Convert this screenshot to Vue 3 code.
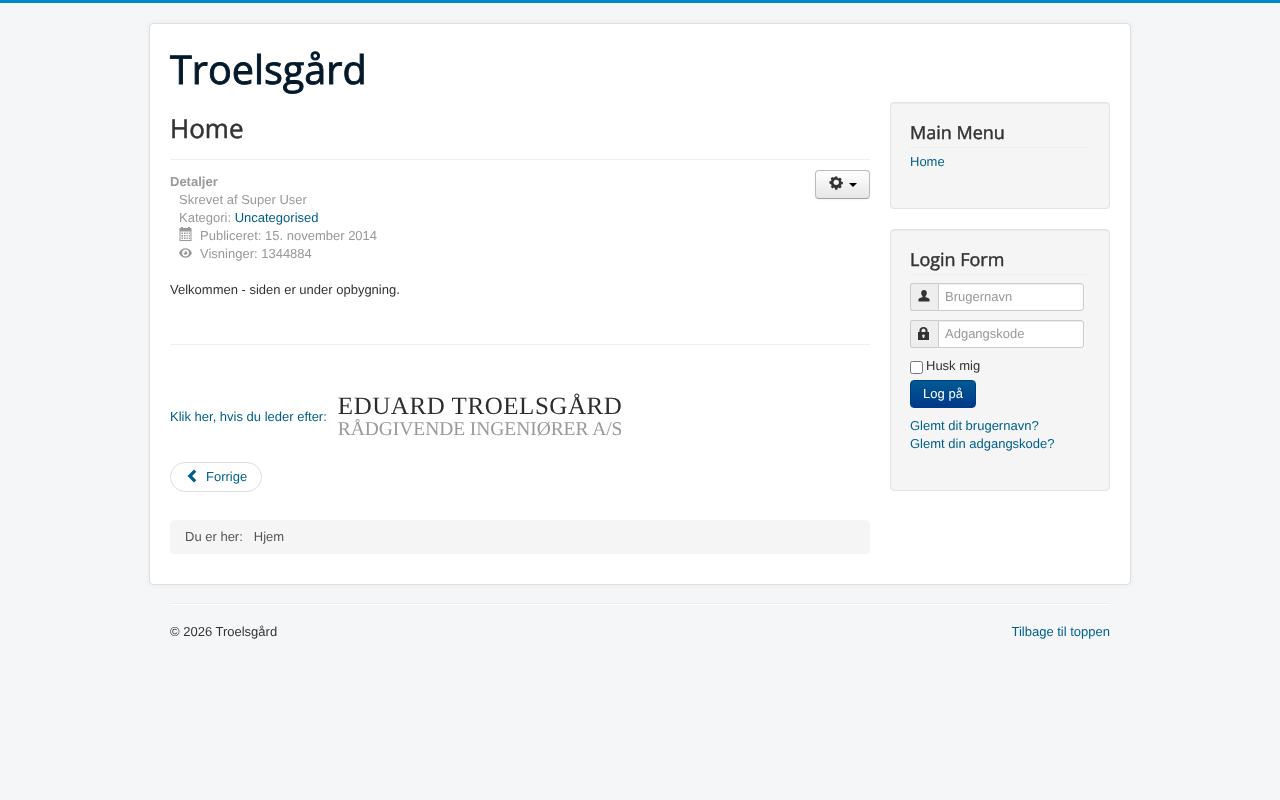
<script setup>
</script>

<template>
  <div class="page">
    <div class="card">
      <header class="brand">Troelsgård</header>
      <div class="columns">
        <main class="main">
          <h1 class="title">Home</h1>
          <div class="details-wrap">
            <button class="gear-btn" type="button" aria-label="Værktøjer">
              <svg class="gear" viewBox="0 0 16 16" width="14" height="14"><path fill="#333" fill-rule="evenodd" d="M6.700 1h2.600l.4 1.900 1.100.5 1.700-1 1.900 1.900-1 1.700.5 1.100 1.900.4v2.600l-1.900.4-.5 1.100 1 1.700-1.900 1.900-1.700-1-1.100.5-.4 1.900H6.700l-.4-1.900-1.100-.5-1.700 1-1.900-1.900 1-1.700-.5-1.100L0 9.300V6.700l1.900-.4.500-1.100-1-1.700 1.900-1.900 1.700 1 1.100-.5zM8 4.800a3.200 3.200 0 1 0 0 6.400 3.200 3.200 0 0 0 0-6.400z" transform="translate(0.500 -0.500) scale(0.97)"/></svg>
              <span class="caret"></span>
            </button>
            <dl class="details">
              <dt>Detaljer</dt>
              <dd>Skrevet af Super User</dd>
              <dd>Kategori: <a href="#">Uncategorised</a></dd>
              <dd class="with-icon">
                <svg class="ico-cal" viewBox="0 0 12 14" width="12" height="14"><path fill="#999" fill-rule="evenodd" d="M1.500 0h2v1h5V0h2v1H12v13H0V1h1.500zM1 4.500V13h10V4.500zM2 5.500h1.500V7H2zm2.500 0H6V7H4.500zm2.500 0h1.300V7H7zm2.300 0H10.500V7H9.300zM2 8h1.500v1.500H2zm2.500 0H6v1.500H4.500zM7 8h1.300v1.500H7zm2.300 0h1.200v1.500H9.300zM2 10.500h1.500V12H2zm2.500 0H6V12H4.500zm2.500 0h1.300V12H7zm2.300 0h1.200V12H9.300z"/></svg>
                <span>Publiceret: 15. november 2014</span>
              </dd>
              <dd class="with-icon">
                <svg class="ico-eye" viewBox="0 0 14 10" width="13" height="10"><path fill="#999" fill-rule="evenodd" d="M7 0c3.200 0 5.800 2 7 5-1.200 3-3.800 5-7 5S1.200 8 0 5c1.200-3 3.800-5 7-5zm0 1.300a3.700 3.700 0 1 0 0 7.400 3.700 3.700 0 0 0 0-7.400zM7 3a2 2 0 1 1-2 2c.6.400 1.600-.2 1.300-.9C6 3.500 6.400 3 7 3z"/></svg>
                <span>Visninger: 1344884</span>
              </dd>
            </dl>
          </div>
          <p class="intro">Velkommen - siden er under opbygning.</p>
          <div class="rule"></div>
          <p class="lookup">
            <a href="#">Klik her, hvis du leder efter:</a>
            <span class="wordmark">
              <span class="wm-top">EDUARD TROELSGÅRD</span>
              <span class="wm-bottom">RÅDGIVENDE INGENIØRER A/S</span>
            </span>
          </p>
          <a class="pager" href="#">
            <svg viewBox="0 0 10 14" width="11" height="14"><path fill="#005e8d" d="M7.500 0.500 9.800 2.800 5.600 7l4.200 4.200-2.300 2.300L1 7z"/></svg>
            <span>Forrige</span>
          </a>
          <div class="crumbs"><span>Du er her:</span><span>Hjem</span></div>
        </main>

        <aside class="side">
          <section class="well menu">
            <h3>Main Menu</h3>
            <a href="#">Home</a>
          </section>
          <section class="well login">
            <h3>Login Form</h3>
            <div class="field">
              <span class="addon">
                <svg viewBox="0 0 12 12" width="12" height="12"><path fill="#333" d="M6 0c1.800 0 2.800 1.300 2.800 3 0 1.200-.5 2.400-1.300 3v1.200c1.800.4 3.500 1 4 1.800V11.500H.5V9c.5-.8 2.200-1.400 4-1.800V6c-.8-.6-1.300-1.800-1.300-3C3.200 1.300 4.200 0 6 0z"/></svg>
              </span>
              <input type="text" placeholder="Brugernavn" />
            </div>
            <div class="field">
              <span class="addon">
                <svg viewBox="1.500 0 9 13" width="11" height="13" preserveAspectRatio="none"><path fill="#333" fill-rule="evenodd" d="M6 0c2 0 3.300 1.300 3.300 3.300V5H10.500v8H1.500V5h1.200V3.300C2.700 1.300 4 0 6 0zm0 1.700c-1 0-1.600.6-1.600 1.700V5h3.200V3.400c0-1.100-.6-1.700-1.600-1.700zM6 7.500a1.200 1.200 0 0 0-.6 2.200V11h1.200V9.700A1.200 1.200 0 0 0 6 7.500z"/></svg>
              </span>
              <input type="text" placeholder="Adgangskode" />
            </div>
            <label class="remember"><input type="checkbox" /><span>Husk mig</span></label>
            <button class="submit" type="button">Log på</button>
            <a class="forgot first" href="#">Glemt dit brugernavn?</a>
            <a class="forgot" href="#">Glemt din adgangskode?</a>
          </section>
        </aside>
      </div>
    </div>
    <footer class="foot">
      <div class="foot-rule"></div>
      <div class="foot-row">
        <span>© 2026 Troelsgård</span>
        <a href="#">Tilbage til toppen</a>
      </div>
    </footer>
  </div>
</template>

<style>
html, body { margin: 0; background: #f4f6f7; }
</style>

<style scoped>
.page {
  border-top: 3px solid #0088cc;
  min-height: 797px;
  box-sizing: border-box;
  padding-top: 20px;
  font: 13px/18px "Liberation Sans", Arial, sans-serif;
  color: #333;
  will-change: transform;
  text-rendering: geometricPrecision;
}
a { color: #005e8d; text-decoration: none; }
.card {
  width: 940px;
  margin: 0 auto;
  padding: 20px;
  height: 520px;
  background: #fff;
  border: 1px solid #dedede;
  border-radius: 4px;
  box-shadow: 0 0 6px rgba(0, 0, 0, 0.05);
  box-sizing: content-box;
}
.brand {
  font: 400 39.600px/50px "Open Sans", sans-serif;
  color: #04192a;
  height: 58px;
  -webkit-text-stroke: 0.9px #04192a;
  white-space: nowrap;
}
.columns { display: flex; gap: 20px; }
.main { width: 700px; }
.title {
  margin: 0;
  font: 400 26px/53px "Open Sans", sans-serif;
  -webkit-text-stroke: 0.5px #333;
  color: #333;
  height: 57px;
  border-bottom: 1px solid #eee;
}
.details-wrap { position: relative; margin-top: 13px; }
.gear-btn {
  position: absolute;
  top: -3px;
  right: 0;
  width: 55px;
  height: 29px;
  display: flex;
  align-items: center;
  justify-content: center;
  gap: 6px;
  padding: 0 0 2px;
  border: 1px solid #bbb;
  border-bottom-color: #a2a2a2;
  border-radius: 4px;
  background: linear-gradient(#fff, #e6e6e6);
  box-shadow: inset 0 1px 0 rgba(255,255,255,.2), 0 1px 2px rgba(0,0,0,.05);
}
.gear { margin-top: -2px; }
.caret {
  width: 0; height: 0;
  border-left: 4px solid transparent;
  border-right: 4px solid transparent;
  border-top: 4px solid #000;
  margin-top: 2px;
}
.details { margin: 0; color: #999; }
.details dt { font-weight: 700; }
.details dd { margin: 0 0 0 9px; }
.with-icon { display: flex; align-items: flex-start; }
.with-icon svg { width: 13px; margin: 0 8px 0 0; flex: none; }
.with-icon .ico-eye { margin-top: 3px; }
.intro { margin: 18px 0 0; }
.rule { height: 1px; margin-top: 45px; background: #eee; }
.lookup {
  margin: 48px 0 0;
  display: flex;
  align-items: center;
  height: 48px;
  gap: 11px;
}
.wordmark {
  display: flex;
  flex-direction: column;
  width: 285px;
  font-family: "Liberation Serif", serif;
  white-space: nowrap;
}
.wm-top { font-size: 25px; line-height: 25px; color: #2d2d2d; letter-spacing: 0.55px; }
.wm-bottom { font-size: 19.500px; line-height: 22px; color: #999; letter-spacing: -0.060px; }
.pager {
  display: inline-flex;
  align-items: center;
  gap: 8px;
  margin-top: 21px;
  height: 28px;
  padding: 0 14px 0 16px;
  border: 1px solid #ddd;
  border-radius: 15px;
  background: #fff;
}
.pager svg { margin: 0 0 3px -1px; }
.pager span { margin-left: 1px; }
.crumbs {
  display: flex;
  gap: 11px;
  margin-top: 28px;
  height: 34px;
  align-items: center;
  padding: 0 15px;
  border-radius: 4px;
  background: #f5f5f5;
  color: #555;
}
.side { width: 220px; }
.well {
  box-sizing: border-box;
  width: 220px;
  padding: 19px;
  background: #f5f5f5;
  border: 1px solid #e3e3e3;
  border-radius: 4px;
  box-shadow: inset 0 1px 1px rgba(0,0,0,.05);
}
.well h3 {
  margin: 0 0 5px;
  width: 178px;
  font: 400 18px/22px "Open Sans", sans-serif;
  -webkit-text-stroke: 0.45px #333;
  color: #333;
  border-bottom: 1px solid #eee;
  padding-bottom: 3px;
}
.menu { height: 107px; }
.menu a { display: block; }
.login { height: 262px; margin-top: 20px; }
.login h3 { margin-bottom: 8px; }
.field {
  display: flex;
  height: 28px;
  width: 174px;
  margin-bottom: 9px;
}
.addon {
  box-sizing: border-box;
  width: 29px;
  display: flex;
  align-items: center;
  justify-content: center;
  padding: 0 2px 2px 0;
  background: #eee;
  border: 1px solid #ccc;
  border-right: 0;
  border-radius: 3px 0 0 3px;
}
.field input {
  box-sizing: border-box;
  width: 146px;
  height: 28px;
  margin: 0;
  padding: 3px 6px 5px;
  font: 13px/18px "Liberation Sans", Arial, sans-serif;
  text-rendering: geometricPrecision;
  color: #555;
  background: #fff;
  border: 1px solid #ccc;
  border-radius: 0 3px 3px 0;
  box-shadow: inset 0 1px 1px rgba(0,0,0,.075);
  outline: none;
}
.field input::placeholder { color: #999; opacity: 1; }
.remember { display: flex; align-items: flex-start; height: 23px; }
.remember input { width: 13px; height: 13px; margin: 4px 3px 0 0; }
.submit {
  display: block;
  box-sizing: border-box;
  width: 66px;
  height: 28px;
  padding: 0;
  font: 13px/18px "Liberation Sans", Arial, sans-serif;
  text-rendering: geometricPrecision;
  color: #fff;
  background: linear-gradient(#005b93, #00388a);
  border: 1px solid #003a80;
  border-radius: 4px;
}
.forgot { display: block; }
.forgot.first { margin-top: 9px; }
.foot { width: 940px; margin: 18px auto 0; }
.foot-rule { height: 1px; background: #eee; box-shadow: 0 1px 0 #fff; }
.foot-row { display: flex; justify-content: space-between; margin-top: 19px; }
</style>
